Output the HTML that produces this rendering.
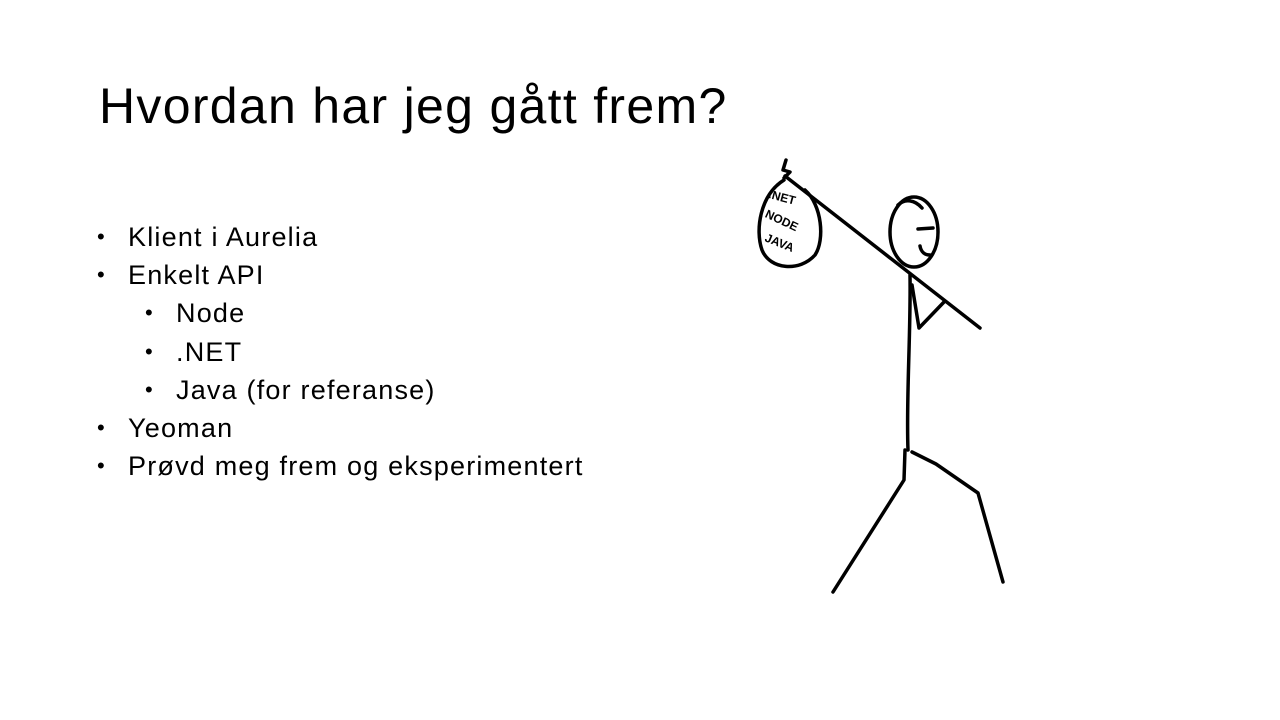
<!DOCTYPE html>
<html><head><meta charset="utf-8"><style>
body{margin:0;width:1280px;height:720px;background:#fff;position:relative;overflow:hidden;font-family:"Liberation Sans",sans-serif;color:#000}
h1{position:absolute;left:99px;top:81px;margin:0;font-weight:normal;font-size:50px;line-height:1;white-space:nowrap;letter-spacing:1.3px}
.l{position:absolute;font-size:27px;line-height:1;white-space:nowrap;letter-spacing:1.2px}
.b{position:absolute;font-size:22px;line-height:1}
</style></head><body>
<h1>Hvordan har jeg gått frem?</h1>
<div class="b" style="left:97px;top:226px">•</div><div class="l" style="left:128px;top:224px">Klient i Aurelia</div>
<div class="b" style="left:97px;top:264px">•</div><div class="l" style="left:128px;top:262px">Enkelt API</div>
<div class="b" style="left:145px;top:302px">•</div><div class="l" style="left:176px;top:300px">Node</div>
<div class="b" style="left:145px;top:341px">•</div><div class="l" style="left:176px;top:339px">.NET</div>
<div class="b" style="left:145px;top:379px">•</div><div class="l" style="left:176px;top:377px">Java (for referanse)</div>
<div class="b" style="left:97px;top:417px">•</div><div class="l" style="left:128px;top:415px">Yeoman</div>
<div class="b" style="left:97px;top:455px">•</div><div class="l" style="left:128px;top:453px">Prøvd meg frem og eksperimentert</div>
<svg width="1280" height="720" style="position:absolute;left:0;top:0" fill="none" stroke="#000" stroke-width="3.5" stroke-linecap="round" stroke-linejoin="round">
<path d="M785 176 L980 328"/>
<path d="M786 160 L783 170 L790 172 L784 178"/>
<path d="M784 180 C760 195 755 230 762 250 C770 270 800 272 815 255 C825 240 822 205 805 190"/>
<ellipse cx="914" cy="232" rx="24" ry="35"/>
<path d="M898 205 C905 198 915 200 922 208"/>
<path d="M918 229 L933 228 M920 246 C921 252 925 255 930 255"/>
<path d="M910 275 C911 330 906 400 908 450"/>
<path d="M912 285 L919 328 L944 302"/>
<path d="M905 450 L904 480 L833 592"/>
<path d="M912 452 L936 464 L978 493 L1003 582"/>
<g font-family="Liberation Sans" font-weight="bold" font-size="12" fill="#000" stroke="none">
<text x="768" y="203" transform="rotate(15 788 200)">.NET</text>
<text x="764" y="226" transform="rotate(25 785 222)">NODE</text>
<text x="764" y="249" transform="rotate(22 785 245)">JAVA</text>
</g>
</svg>
</body></html>
